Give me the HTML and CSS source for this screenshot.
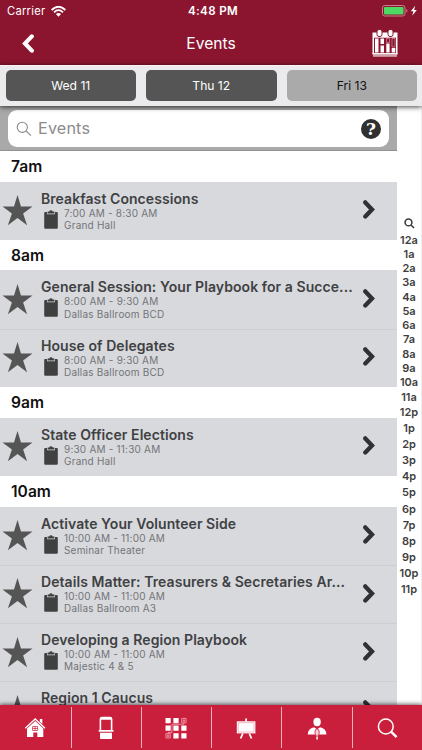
FILE: index.html
```html
<!DOCTYPE html>
<html lang="en">
<head>
<meta charset="utf-8">
<title>Events</title>
<link rel="stylesheet" href="styles.css">
</head>
<body>
<svg class="defs" width="0" height="0">
  <symbol id="star" viewBox="0 0 32 32"><path d="M16 0 L19.6 11.9 H31.5 L21.8 19.2 L25.9 31.2 L16 23.8 L6.1 31.2 L10.2 19.2 L.5 11.9 H12.4Z"/></symbol>
  <symbol id="clip" viewBox="0 0 14 19"><path d="M1.3 2H3v2.2h8V2h1.7q1.1 0 1.1 1.1v14.6q0 1.1-1.1 1.1H1.3q-1.1 0-1.1-1.1V3.1Q.2 2 1.3 2z"/><path d="M3.6 3.6V1.5H5.3Q5.6.2 7 .2t1.7 1.3h1.7v2.1z"/></symbol>
  <symbol id="chev" viewBox="0 0 12 19"><path d="M2.3 2.4 L9 9.4 L2.3 16.4" fill="none" stroke="#303133" stroke-width="4.3" stroke-linecap="round" stroke-linejoin="miter"/></symbol>
</svg>
<div class="app">
  <header class="top">
    <div class="status">
      <span class="carrier">Carrier</span>
      <svg class="wifi" viewBox="0 0 15 11"><path d="M.6 4 Q7.5-2.6 14.4 4 M3 6.3 Q7.5 2 12 6.3" fill="none" stroke="#fff" stroke-width="1.8"/><path d="M4.9 8.1 Q7.5 5.7 10.1 8.1 L7.5 10.7z" fill="#fff"/></svg>
      <span class="clock">4:48 PM</span>
      <svg class="battery" viewBox="0 0 36 12"><rect x=".5" y=".5" width="22.5" height="10.5" rx="2.3" fill="none" stroke="#c7808e"/><rect x="2" y="2" width="19.5" height="7.5" rx="1" fill="#4cd964"/><path d="M24.3 4v3.6q1.2-.5 1.2-1.8T24.3 4z" fill="#c7808e"/><path d="M33.2.8 L28.8 6.2 H31.4 L30.2 10.8 L34.8 5.1 H32.1z" fill="#fff"/></svg>
    </div>
    <div class="nav">
      <svg class="back" viewBox="0 0 12 19"><path d="M9.8 2.4 L3 9.4 L9.8 16.6" fill="none" stroke="#fff" stroke-width="4.2" stroke-linecap="round"/></svg>
      <h1>Events</h1>
      <svg class="cal" viewBox="0 0 26 28"><g fill="#fff"><path d="M.5 3.5h25v22H.5z"/><rect x="5" y=".5" width="5" height="7" rx="2" stroke="#8b152f"/><rect x="16" y=".5" width="5" height="7" rx="2" stroke="#8b152f"/><path d="M1 26.4h24v1.1H1z"/></g><path d="M2 8.7h22v15.5H2z" fill="#8b152f"/><path d="M3 9.5h3.5v14H3zM8.5 9.5H12V15H8.5zM8.5 16.5H12v7H8.5zM14.3 14.5h3.3v9h-3.3zM19.7 19h3.6v4.5h-3.6z" fill="#fff"/><path d="M14.5 9.5h3v4h-3zM20 9.5h3v8.5h-3z" fill="none" stroke="#d9a4b0" stroke-width=".6"/><path d="M.5 24.8h25" stroke="#fff"/></svg>
    </div>
  </header>
  <div class="days"><span class="day">Wed 11</span><span class="day">Thu 12</span><span class="day on">Fri 13</span></div>
  <main class="body">
    <section class="list">
      <div class="searchbar"><div class="field">
        <svg class="mag" viewBox="0 0 16 16"><circle cx="6.3" cy="6.3" r="5.1"/><path d="M10 10l5 4.7"/></svg>
        <span>Events</span>
        <b class="help">?</b>
      </div></div>
      <h2>7am</h2>
      <article><svg class="star"><use href="#star"/></svg><div class="info"><h3>Breakfast Concessions</h3><div class="meta"><svg class="clip"><use href="#clip"/></svg><p>7:00 AM - 8:30 AM<br>Grand Hall</p></div></div><svg class="chev"><use href="#chev"/></svg></article>
      <h2>8am</h2>
      <article><svg class="star"><use href="#star"/></svg><div class="info"><h3>General Session: Your Playbook for a Succe...</h3><div class="meta"><svg class="clip"><use href="#clip"/></svg><p>8:00 AM - 9:30 AM<br>Dallas Ballroom BCD</p></div></div><svg class="chev"><use href="#chev"/></svg></article>
      <article><svg class="star"><use href="#star"/></svg><div class="info"><h3>House of Delegates</h3><div class="meta"><svg class="clip"><use href="#clip"/></svg><p>8:00 AM - 9:30 AM<br>Dallas Ballroom BCD</p></div></div><svg class="chev"><use href="#chev"/></svg></article>
      <h2>9am</h2>
      <article><svg class="star"><use href="#star"/></svg><div class="info"><h3>State Officer Elections</h3><div class="meta"><svg class="clip"><use href="#clip"/></svg><p>9:30 AM - 11:30 AM<br>Grand Hall</p></div></div><svg class="chev"><use href="#chev"/></svg></article>
      <h2>10am</h2>
      <article><svg class="star"><use href="#star"/></svg><div class="info"><h3>Activate Your Volunteer Side</h3><div class="meta"><svg class="clip"><use href="#clip"/></svg><p>10:00 AM - 11:00 AM<br>Seminar Theater</p></div></div><svg class="chev"><use href="#chev"/></svg></article>
      <article><svg class="star"><use href="#star"/></svg><div class="info"><h3>Details Matter: Treasurers &amp; Secretaries Ar...</h3><div class="meta"><svg class="clip"><use href="#clip"/></svg><p>10:00 AM - 11:00 AM<br>Dallas Ballroom A3</p></div></div><svg class="chev"><use href="#chev"/></svg></article>
      <article><svg class="star"><use href="#star"/></svg><div class="info"><h3>Developing a Region Playbook</h3><div class="meta"><svg class="clip"><use href="#clip"/></svg><p>10:00 AM - 11:00 AM<br>Majestic 4 &amp; 5</p></div></div><svg class="chev"><use href="#chev"/></svg></article>
      <article><svg class="star"><use href="#star"/></svg><div class="info"><h3>Region 1 Caucus</h3></div><svg class="chev"><use href="#chev"/></svg></article>
    </section>
    <aside class="index">
      <svg viewBox="0 0 11 11"><circle cx="4.5" cy="4.4" r="3.4"/><path d="M7 7l3 3"/></svg>
      <div class="am"><span>12a</span><span>1a</span><span>2a</span><span>3a</span><span>4a</span><span>5a</span><span>6a</span><span>7a</span><span>8a</span><span>9a</span><span>10a</span><span>11a</span></div>
      <div class="pm"><span>12p</span><span>1p</span><span>2p</span><span>3p</span><span>4p</span><span>5p</span><span>6p</span><span>7p</span><span>8p</span><span>9p</span><span>10p</span><span>11p</span></div>
    </aside>
  </main>
  <footer class="tabs">
    <div><svg viewBox="0 0 24 24"><g fill="#fff"><path d="M4 12.5 L12.3 5 L20.3 12.5V21H14.3V16.5H10.3V21H4z"/><path d="M16.8 3h2.5v5l-2.5-2.3z"/></g><path d="M2.3 12.3 L12.2 3 L22 12.3" fill="none" stroke="#fff" stroke-width="1.3"/><path d="M9.6 10.5h5v4h-5zM12.1 10.5v4M9.6 12.5h5" fill="none" stroke="#c91f3d" stroke-width=".7"/></svg></div>
    <div><svg viewBox="0 0 24 24"><path d="M6.4 14V3Q6.4 1.5 8 1.5h8q1.6 0 1.6 1.5V14" fill="none" stroke="#fff" stroke-width="1.6"/><path d="M6 2.8h12M4.7 14.8h14.8" stroke="#fff" stroke-width="1.8"/><path d="M6 16.7h12v5.2q0 1.2-1.2 1.2H7.2Q6 23.1 6 21.9z" fill="#fff"/></svg></div>
    <div><svg viewBox="0 0 24 24"><g fill="#fff"><path d="M1.500 2h5.200v5.200H1.500zM9.400 2h5.200v5.200H9.400zM1.500 9.600h5.200v5.200H1.500zM9.400 9.600h5.200v5.200H9.400zM17.300 9.600h5.200v5.200h-5.200zM9.400 17.200h5.200v5.200H9.400zM17.300 17.200h5.200v5.200h-5.200z"/></g><g fill="none" stroke="#f6aab9" stroke-width=".8"><path d="M17.700 2.400h4.400v4.400h-4.400zM19.200 3.900h1.400v1.400h-1.400zM1.900 17.600h4.400V22H1.900zM3.400 19.100h1.400v1.400H3.400zM19.900 7v1.200H8v8.200H4.100v1"/></g></svg></div>
    <div><svg viewBox="0 0 24 24"><path d="M2.800 5.300h18.600v12.100H2.800z" fill="#fff"/><path d="M4.200 6.700h15.800V16H4.200z" fill="none" stroke="#ef9aaa" stroke-width=".7"/><path d="M12.100 2.500v3M8.800 17.500l-2.200 5M15.300 17.500l2.200 5" stroke="#fff" stroke-width="1.8"/></svg></div>
    <div><svg viewBox="0 0 24 24"><g fill="#fff"><ellipse cx="12.100" cy="6" rx="3.700" ry="4.200"/><path d="M2.800 18.400q0-5.500 6.200-7.100l3.100 2 3.100-2q6.200 1.600 6.200 7.100z"/></g><path d="M12.100 13q2.200 0 2.200 3.200t-2.200 4.400q-2.200-1.200-2.200-4.400t2.200-3.200z" fill="#f9c9d2" stroke="#c91f3d" stroke-width=".8"/><path d="M12.100 20.500v3" stroke="#fff" stroke-width="1.500"/></svg></div>
    <div><svg viewBox="0 0 24 24"><g fill="none" stroke="#fff"><circle cx="10.800" cy="10.500" r="7.400" stroke-width="1.500"/><path d="M16 15.700l5.600 5.500" stroke-width="2.400"/></g></svg></div>
  </footer>
</div>
</body>
</html>
```
FILE: styles.css
```css
* { box-sizing: border-box; }
body { margin: 0; font-family: Inter, "Liberation Sans", sans-serif; background: #fff; }
h1, h2, h3, p { margin: 0; font-weight: 400; }
svg { display: block; flex: none; }
.defs { position: absolute; }
.app { width: 422px; height: 750px; display: flex; flex-direction: column; overflow: hidden; }

.top { flex: none; height: 65px; background: #8b152f; color: #fff; }
.status { height: 22px; display: grid; grid-template-columns: 44px 137px 1fr 36px; align-items: center; padding: 0 4px 0 7px; }
.carrier { font-size: 11.2px; letter-spacing: .25px; }
.wifi { width: 15px; height: 11px; }
.clock { font-size: 11.6px; font-weight: 600; letter-spacing: .35px; }
.battery { width: 36px; height: 12px; }
.nav { height: 43px; display: grid; grid-template-columns: 60px 1fr 60px; align-items: center; }
.back { width: 12px; height: 19px; margin-left: 22px; }
.nav h1 { font-size: 15.6px; text-align: center; }
.cal { width: 26px; height: 28px; margin: -2px 0 0 10px; }

.days { flex: none; height: 41px; background: #ebebed; display: grid; grid-template-columns: repeat(3, 1fr); gap: 10px; padding: 4px 5px 5px 5.5px; z-index: 2; box-shadow: 0 1px 5px rgba(0,0,0,.75); border-top: 1px solid #f6f1f3; }
.day { height: 31px; border-radius: 5px; background: #555; color: #fff; font-size: 12.1px; display: flex; align-items: center; justify-content: center; }
.day.on { background: #aaa; color: #111; }

.body { flex: 1; min-height: 0; display: grid; grid-template-columns: 397px 25px; overflow: hidden; }
.list { min-width: 0; }
.searchbar { height: 45px; background: #a9a9a9; padding: 4px 8px; border-bottom: 1px solid #919191; }
.field { height: 37px; border-radius: 9px; background: #fff; display: flex; align-items: center; padding: 0 8px; color: #8b8b8d; font-size: 16.2px; letter-spacing: .15px; }
.field span { margin-top: -1px; }
.mag { width: 16px; height: 16px; margin-right: 6px; fill: none; stroke: #8b8b8d; stroke-width: 1.1; }
.help { margin-left: auto; width: 20px; height: 20px; border-radius: 50%; background: #303030; color: #fff; font-family: "DejaVu Serif", serif; font-size: 17px; font-weight: 700; line-height: 20px; text-align: center; letter-spacing: 0; }
.list h2 { height: 30.6px; line-height: 31px; padding-left: 11px; font-size: 15.6px; font-weight: 600; color: #111; }
article { height: 58.3px; background: #d8d9dd; display: flex; }
article + article { box-shadow: inset 0 1px #cdced1; }
.star { width: 31px; height: 31px; margin: 13.5px 8px 0 2px; fill: #555; }
.info { flex: 1; min-width: 0; padding-top: 8px; }
.info h3 { font-size: 14px; line-height: 17px; letter-spacing: .07px; font-weight: 600; color: #404143; white-space: nowrap; }
.meta { display: flex; }
.clip { width: 14px; height: 19px; margin: 3px 6px 0 3px; fill: #404040; }
.meta p { font-size: 10px; line-height: 12.3px; letter-spacing: .2px; color: #737477; }
.chev { width: 12px; height: 19px; margin: 18.7px 22px 0 0; }

.index { padding-top: 112px; border-right: 1px solid #eee; color: #3e3e40; font-size: 11px; font-weight: 600; text-align: center; }
.index svg { width: 11px; height: 11px; margin: 0 auto 3.6px; fill: none; stroke: #3e3e40; stroke-width: 1.6; }
.index span { display: block; }
.am span { height: 14.27px; line-height: 14.27px; }
.pm span { height: 16.15px; line-height: 16.15px; }

.tabs { flex: none; height: 45px; background: #c91f3d; display: grid; grid-template-columns: 71.500px repeat(4, 70.300px) 1fr; padding: 2px 0; z-index: 2; box-shadow: 0 -1px 4px rgba(0,0,0,.6); }
.tabs div { display: flex; align-items: center; justify-content: center; border-right: 1px solid #efb3be; }
.tabs div:last-child { border: 0; }
.tabs svg { width: 24px; height: 24px; }
.tabs div:nth-child(n+2) svg { margin-right: 1px; }
```
